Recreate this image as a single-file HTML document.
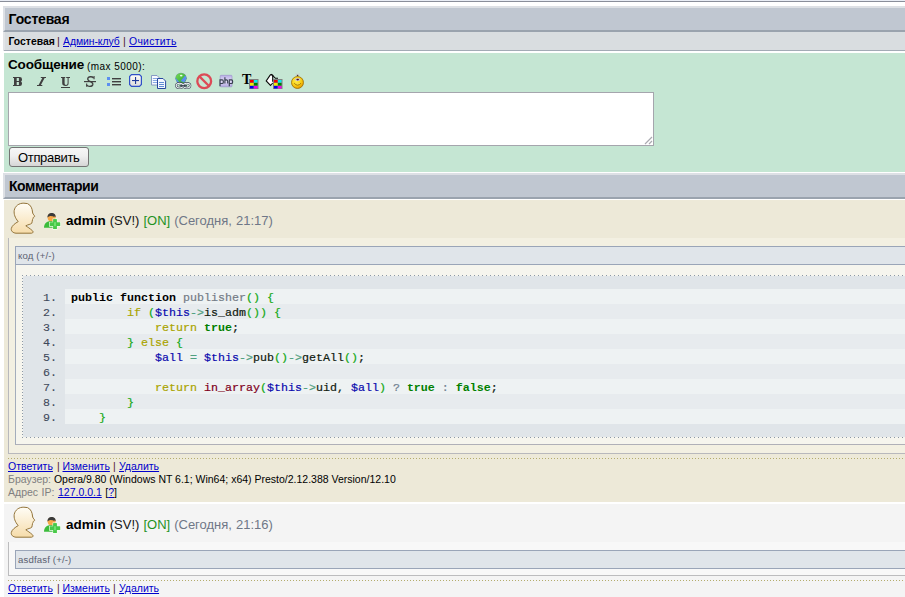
<!DOCTYPE html>
<html><head><meta charset="utf-8">
<style>
*{margin:0;padding:0;box-sizing:border-box}
html,body{width:905px;height:597px;overflow:hidden;background:#fff;font-family:"Liberation Sans",sans-serif;color:#000}
.a{position:absolute}
.t{position:absolute;white-space:nowrap;line-height:1}
.u{color:#0000cc;text-decoration:underline}
.sep{color:#502030}
.hdr{left:3px;width:910px;height:26px;background:#c0c7d1;border-top:2px solid #dde0e5;border-left:2px solid #dde0e5;border-bottom:2px solid #9aa3ae}
.mono{font-family:"Liberation Mono",monospace;font-size:11.67px;-webkit-text-stroke:0.2px currentColor}
svg{position:absolute;overflow:visible}
.row{position:absolute;left:65px;width:850px;height:15px}
.ln{position:absolute;left:23px;width:34px;text-align:right;color:#3e485a;-webkit-text-stroke:0.1px currentColor}
.code{position:absolute;left:71px;white-space:pre;color:#000}
.kw{font-weight:bold;color:#000;-webkit-text-stroke:0}
.fn{color:#747c86}
.gr{color:#14a814}
.ol{color:#aaa400}
.nv{color:#0a0aae}
.op{color:#50a080}
.dr{color:#800020}
.tr{color:#008000;font-weight:bold;-webkit-text-stroke:0}
.q{color:#708090}
.dk{color:#102010}
</style></head><body>
<div class="a" style="left:0;top:0;width:905px;height:1px;background:#e9edf5"></div>
<div class="a" style="left:0;top:1px;width:905px;height:1px;background:#8a8e9a"></div>

<!-- header 1 -->
<div class="a hdr" style="top:6px"></div>
<div class="t" id="h1" style="left:8.6px;top:12px;font-size:14px;font-weight:bold;letter-spacing:-0.2px">Гостевая</div>

<!-- subnav -->
<div class="a" style="left:3px;top:32px;width:910px;height:19px;background:#d9dde0;border-left:2px solid #e2e4e7"></div><div class="a" style="left:4px;top:50px;width:910px;height:1px;background:#a3abb5"></div>
<div class="t" id="sn1" style="left:8.5px;top:36.5px;font-size:10.4px;font-weight:bold;letter-spacing:0px">Гостевая</div>
<div class="t sep" id="sep1" style="left:57px;top:36px;font-size:11px">|</div>
<div class="t u" id="sn2" style="left:63px;top:36.5px;font-size:10.4px;letter-spacing:-0.05px">Админ-клуб</div>
<div class="t sep" id="sep2" style="left:123px;top:36px;font-size:11px">|</div>
<div class="t u" id="sn3" style="left:129px;top:36.5px;font-size:10.4px;letter-spacing:0.3px">Очистить</div>

<!-- green -->
<div class="a" style="left:4px;top:53px;width:910px;height:119px;background:#c5e6d3"></div>
<div class="t" id="msg1" style="left:8px;top:58px;font-size:13.5px;font-weight:bold;letter-spacing:-0.15px">Сообщение</div>
<div class="t" id="msg2" style="left:87px;top:62px;font-size:10px;letter-spacing:0.45px">(max 5000):</div>

<!-- toolbar -->
<svg style="left:13px;top:77px" width="10" height="10"><path fill="#404040" fill-rule="evenodd" d="M0 0H6.8Q9 0 9 2.2V2.8Q9 4 8 4.5Q9 5 9 6.3V6.8Q9 9 6.8 9H0V8.1H1V0.9H0Z M3.7 1.1H5.9V3.9H3.7Z M3.7 5.1H5.9V7.9H3.7Z"/></svg>
<svg style="left:37px;top:77px" width="10" height="10"><path fill="#404040" d="M3.8 0H9V1H3.8Z M0 8H5.3V9H0Z M5.3 1H7.6L3.9 8H1.6Z"/></svg>
<svg style="left:61px;top:77px" width="10" height="12"><path fill="#404040" d="M0 0H4.2V1H0Z M5.2 0H9V1H5.2Z M1.2 1H3.6V6.3Q3.6 8 5 8Q6.6 8 6.6 6.3V1H7.6V6.3Q7.6 9 4.8 9Q1.2 9 1.2 6.3Z M0 9.9H9V10.9H0Z"/></svg>
<svg style="left:84px;top:76px" width="13" height="12"><path fill="#404040" d="M0 5H12V6.2H0Z"/><path fill="none" stroke="#404040" stroke-width="1.4" d="M9.6 2Q8.5 0.7 6.5 0.8Q3.5 1 3.8 3.3Q4 4.6 6.5 5.6Q9 6.6 8.8 8.4Q8.5 10.5 5.5 10.4Q3.5 10.3 2.8 9"/><path fill="#404040" d="M9.5 0H10.6V3.2H9.5Z M2.1 7.4H3.2V10.8H2.1Z"/></svg>
<!-- list -->
<svg style="left:106px;top:76px" width="16" height="12">
 <rect x="1" y="1" width="3" height="3" fill="#5b8ef0"/><rect x="1" y="7" width="3" height="3" fill="#5b8ef0"/>
 <rect x="6" y="2" width="9" height="1.4" fill="#404040"/><rect x="6" y="5" width="9" height="1.4" fill="#404040"/><rect x="6" y="8" width="9" height="1.4" fill="#404040"/>
</svg>
<!-- plus box -->
<svg style="left:129px;top:74px" width="14" height="14">
 <defs><linearGradient id="pg" x1="0" y1="0" x2="0" y2="1"><stop offset="0" stop-color="#fffef8"/><stop offset="1" stop-color="#dcdcdc"/></linearGradient></defs>
 <path d="M2.5 0.6H10.5L12.4 2.5V10.5L10.5 12.4H2.5L0.6 10.5V2.5Z" fill="url(#pg)" stroke="#3050c8" stroke-width="1.2"/>
 <rect x="6" y="3" width="1.1" height="7" fill="#1f3a9a"/><rect x="3" y="6" width="7" height="1.1" fill="#1f3a9a"/>
</svg>
<!-- copy -->
<svg style="left:151px;top:75px" width="16" height="14">
 <path d="M0.5 0.5h5.5l2.5 2.5v7h-8z" fill="#f8faff" stroke="#7c90c0" stroke-width="0.9"/>
 <rect x="1.8" y="3" width="4.5" height="0.9" fill="#7aa0e0"/><rect x="1.8" y="5" width="4.5" height="0.9" fill="#7aa0e0"/><rect x="1.8" y="7" width="4.5" height="0.9" fill="#7aa0e0"/>
 <path d="M6.5 3.5h5.5l2.6 2.6v7.4h-8.1z" fill="#f4f8ff" stroke="#2848a0" stroke-width="1"/>
 <rect x="8" y="7" width="5" height="0.9" fill="#5080d0"/><rect x="8" y="9" width="5" height="0.9" fill="#5080d0"/><rect x="8" y="11" width="5" height="0.9" fill="#5080d0"/>
</svg>
<!-- globe link -->
<svg style="left:175px;top:73px" width="18" height="17">
 <defs><clipPath id="gc"><circle cx="6" cy="5.3" r="5.4"/></clipPath>
 <linearGradient id="ggr" x1="0" y1="0" x2="1" y2="1"><stop offset="0" stop-color="#7ee05a"/><stop offset="1" stop-color="#1a9a2a"/></linearGradient></defs>
 <circle cx="6" cy="5.3" r="5.6" fill="#7a8ab0"/>
 <g clip-path="url(#gc)">
  <rect x="0" y="-1" width="13" height="13" fill="url(#ggr)"/>
  <path d="M0 4L4.8 9.8 0 11Z" fill="#5a8ef0"/>
  <path d="M10.2 2.6L5.6 8 9.4 9.4 12 5Z" fill="#5a8ef0"/>
 </g>
 <ellipse cx="6.2" cy="2.6" rx="1.3" ry="0.9" fill="#e8ffe8"/>
 <ellipse cx="4.6" cy="12.6" rx="3.4" ry="2.4" fill="none" stroke="#3c4656" stroke-width="2.2"/>
 <ellipse cx="11.8" cy="12.6" rx="3.4" ry="2.4" fill="none" stroke="#3c4656" stroke-width="2.2"/>
 <ellipse cx="4.6" cy="12.6" rx="3.4" ry="2.4" fill="none" stroke="#eef2f6" stroke-width="1.1"/>
 <ellipse cx="11.8" cy="12.6" rx="3.4" ry="2.4" fill="none" stroke="#eef2f6" stroke-width="1.1"/>
 <rect x="4.5" y="12.2" width="7.5" height="1.3" fill="#2a3444"/>
</svg>
<!-- stop -->
<svg style="left:196px;top:73px" width="17" height="17">
 <circle cx="8.2" cy="8.2" r="6.9" fill="none" stroke="#dc4a56" stroke-width="2.3"/>
 <path d="M3.4 3.4l9.6 9.6" stroke="#dc4a56" stroke-width="2.3"/>
</svg>
<!-- php -->
<svg style="left:219px;top:75px" width="15" height="13">
 <defs><linearGradient id="phg" x1="0" y1="0" x2="0" y2="1"><stop offset="0" stop-color="#b8aee6"/><stop offset="0.5" stop-color="#e4def8"/><stop offset="1" stop-color="#b0a6e0"/></linearGradient></defs>
 <rect x="1.2" y="0.3" width="11.8" height="11.5" rx="0.8" fill="url(#phg)" stroke="#9a90c8" stroke-width="0.6"/>
 <path d="M1 11.2V4.9H3.2Q4.3 4.9 4.3 6.2V7.2Q4.3 8.5 3.2 8.5H1 M5.9 2.2V8.6 M5.9 5.4Q6.3 4.9 7.3 4.9Q8.7 4.9 8.7 6.2V8.6 M10.3 11.2V4.9H12.5Q13.6 4.9 13.6 6.2V7.2Q13.6 8.5 12.5 8.5H10.3" fill="none" stroke="#384050" stroke-width="1.15"/>
</svg>
<!-- T color -->
<div class="t" style="left:242px;top:73px;font-family:'Liberation Serif',serif;font-size:14px;font-weight:bold">T</div>
<svg style="left:249px;top:79px" width="10" height="10">
 <rect x="0" y="0" width="9.5" height="10" fill="#808080"/>
 <rect x="1" y="1" width="3.5" height="2.5" fill="#f00000"/><rect x="5" y="1" width="3.5" height="2.5" fill="#00f0f0"/>
 <rect x="1" y="4" width="3.5" height="2.5" fill="#f0f000"/><rect x="5" y="4" width="3.5" height="2.5" fill="#008000"/>
 <rect x="1" y="7" width="3.5" height="2.5" fill="#0000f0"/><rect x="5" y="7" width="3.5" height="2.5" fill="#f000f0"/>
</svg>
<!-- bucket -->
<svg style="left:265px;top:73px" width="18" height="17">
 <path d="M5.5 1.8L1.4 7.9 5.5 12.3 7.7 10V3.3Q6.6 1.2 5.5 1.8Z" fill="#fff"/>
 <path d="M5.5 1.6L1.2 7.9 5.5 12.5 7.7 10 M5 2.2Q6.6 0.6 7.7 3.3V8.8 M6.2 1.3Q7.4 1.4 9 3.8L10.4 5.3H13" fill="none" stroke="#0a0a0a" stroke-width="1.1"/>
</svg>
<svg style="left:273px;top:79px" width="10" height="10">
 <rect x="0" y="0" width="9.5" height="10" fill="#808080"/>
 <rect x="1" y="1" width="3.5" height="2.5" fill="#f00000"/><rect x="5" y="1" width="3.5" height="2.5" fill="#00f0f0"/>
 <rect x="1" y="4" width="3.5" height="2.5" fill="#f0f000"/><rect x="5" y="4" width="3.5" height="2.5" fill="#008000"/>
 <rect x="1" y="7" width="3.5" height="2.5" fill="#0000f0"/><rect x="5" y="7" width="3.5" height="2.5" fill="#f000f0"/>
</svg>
<!-- smiley -->
<svg style="left:290px;top:72px" width="16" height="18">
 <defs><radialGradient id="sg" cx="0.4" cy="0.35" r="0.7"><stop offset="0" stop-color="#fff050"/><stop offset="0.6" stop-color="#f8cc10"/><stop offset="1" stop-color="#e09000"/></radialGradient></defs>
 <path d="M5.6 1.6L9.6 4M9.6 1.6L5.6 4" stroke="#c8c8c8" stroke-width="0.9"/>
 <circle cx="7.6" cy="3.6" r="0.8" fill="#503820"/>
 <circle cx="7.5" cy="10.5" r="6" fill="url(#sg)" stroke="#9a6c00" stroke-width="0.8"/>
 <ellipse cx="7.7" cy="7.6" rx="2.8" ry="1.4" fill="#c4bce0"/>
 <ellipse cx="7.7" cy="7.6" rx="1.3" ry="0.8" fill="#501818"/>
 <path d="M4.2 11.2Q7.6 15.2 11 11.2" fill="#f8e040" stroke="#a07000" stroke-width="0.9"/>
</svg>
<!-- textarea -->
<div class="a" style="left:8px;top:92px;width:646px;height:54px;background:#fff;border:1px solid #a5a5ad"></div>
<svg style="left:644px;top:136px" width="9" height="9">
 <path d="M1 8L8 1M5 8L8 5" stroke="#aaaab0" stroke-width="1.2"/>
</svg>
<!-- button -->
<div class="a" id="btn" style="left:9px;top:147px;width:80px;height:20px;border:1px solid #747474;border-radius:3px;background:linear-gradient(#f7f7f7,#efefef 45%,#d6d6d6)"></div>
<div class="t" id="btnt" style="left:18px;top:151px;font-size:13px;letter-spacing:-0.33px">Отправить</div>

<!-- header 2 -->
<div class="a hdr" style="top:173px"></div>
<div class="t" id="h2" style="left:9px;top:179px;font-size:14px;font-weight:bold;letter-spacing:-0.45px">Комментарии</div>

<!-- comment 1 -->
<div class="a" style="left:4px;top:200px;width:910px;height:302px;background:#ede9d8"></div>
<svg class="avatar" style="left:8px;top:200px" width="30" height="36">
 <defs><linearGradient id="ag" x1="0" y1="0" x2="0" y2="1"><stop offset="0" stop-color="#fffdf6"/><stop offset="1" stop-color="#f6dcaa"/></linearGradient></defs>
 <path d="M15.9 3.2C11 3 7 6 6.2 10.5 5.8 14 6.8 17.5 10.2 21.6 7 23.5 4 25.5 3.3 28.5 2.8 31 5 33 8 33.2L23.5 33.2C25.5 33 25.3 31.5 24.5 30.8 22 28.5 19.5 27 17.8 25.8 20 24.5 22.5 24.5 23.8 23.2 24.5 22 24 20.5 24.5 19.5 25.2 18.8 25 18 25.2 17.5 26 17 27 16.8 26.5 15.8 25.5 14.5 24.5 13.5 24.5 12 24.3 9 23 5 19.5 3.6z" fill="url(#ag)" stroke="#93743a" stroke-width="1"/>
</svg>
<svg style="left:42px;top:210px" width="20" height="20">
 <circle cx="9.6" cy="7.6" r="4" fill="#f6a848"/>
 <path d="M5.5 7.6C5.3 4 7.5 2.9 9.7 2.9 11.8 2.9 13.9 4 13.7 7.3 13 6.3 12.2 6.2 11.3 6.8 10.5 5.8 9.3 6.3 8.3 6 7.3 6.3 6.3 6.6 5.5 7.6Z" fill="#3a3a3a"/>
 <path d="M2 17.8C2 14.5 3.5 11.8 7.5 11.3H11.5V17.8Z" fill="#3cbc3c"/>
 <path d="M11.3 9.3H14.7V12.6H18.1V16H14.7V19H11.3V16H7.9V12.6H11.3Z" fill="#4ccc4c" stroke="#f4fff0" stroke-width="1.4" paint-order="stroke"/>
 <path d="M11.3 9.3H14.7V12.6H18.1V16H14.7V19H11.3V16H7.9V12.6H11.3Z" fill="#48c848"/>
 <rect x="12" y="12.2" width="2" height="4" fill="#80e880" opacity="0.7"/>
</svg>
<div class="t" id="c1h" style="left:66px;top:214px;word-spacing:0.4px;font-size:13px"><b style="font-size:13.5px">admin</b> <span style="color:#141414">(SV!)</span> <span style="color:#1f921f">[ON]</span> <span style="color:#6f7787">(Сегодня, 21:17)</span></div>

<!-- code box -->
<div class="a" style="left:8px;top:238px;width:910px;height:216px;background:#f3f0e2;border-left:1px solid #b8b8bc;border-bottom:1px solid #b8b8bc"></div>
<div class="a" style="left:15px;top:246px;width:910px;height:199px;background:#f6f5ee;border-left:1px solid #a4adbc;border-bottom:1px solid #b0b0b8"></div>
<div class="a" style="left:15px;top:246px;width:910px;height:19px;background:#e0e5ea;border-top:1px solid #9aa5b8;border-left:1px solid #9aa5b8;border-bottom:1px solid #9aa5b8"></div>
<div class="t" id="kod" style="left:18px;top:251px;font-size:9.6px;letter-spacing:0.15px;color:#5a6070">код (+/-)</div>
<div class="a" style="left:22px;top:275px;width:900px;height:163px;background:#e0e5e9"></div><div class="a" style="left:22px;top:275px;width:900px;height:1px;background:repeating-linear-gradient(90deg,#8c98a6 0 1px,#f6f5ee 1px 4px)"></div><div class="a" style="left:22px;top:437px;width:900px;height:1px;background:repeating-linear-gradient(90deg,#8c98a6 0 1px,#f6f5ee 1px 4px)"></div><div class="a" style="left:22px;top:275px;width:1px;height:163px;background:repeating-linear-gradient(180deg,#8c98a6 0 1px,#f6f5ee 1px 3px)"></div>

<div class="row" style="top:289px;background:#eef2f3"></div>
<div class="row" style="top:304px;background:#e7ebee"></div>
<div class="row" style="top:319px;background:#eef2f3"></div>
<div class="row" style="top:334px;background:#e7ebee"></div>
<div class="row" style="top:349px;background:#eef2f3"></div>
<div class="row" style="top:364px;background:#e7ebee"></div>
<div class="row" style="top:379px;background:#eef2f3"></div>
<div class="row" style="top:394px;background:#e7ebee"></div>
<div class="row" style="top:409px;background:#eef2f3"></div>

<div class="mono">
<div class="ln t" style="top:293px">1.</div>
<div class="ln t" style="top:308px">2.</div>
<div class="ln t" style="top:323px">3.</div>
<div class="ln t" style="top:338px">4.</div>
<div class="ln t" style="top:353px">5.</div>
<div class="ln t" style="top:368px">6.</div>
<div class="ln t" style="top:383px">7.</div>
<div class="ln t" style="top:398px">8.</div>
<div class="ln t" style="top:413px">9.</div>
<div class="code t" id="cl1" style="top:293px"><span class="kw">public function</span> <span class="fn">publisher</span><span class="gr">() {</span></div>
<div class="code t" style="top:308px">        <span class="ol">if</span> <span class="gr">(</span><span class="nv">$this</span><span class="op">-&gt;</span><span class="dk">is_adm</span><span class="gr">()) {</span></div>
<div class="code t" style="top:323px">            <span class="ol">return</span> <span class="tr">true</span><span class="dk">;</span></div>
<div class="code t" style="top:338px">        <span class="gr">}</span> <span class="ol">else</span> <span class="gr">{</span></div>
<div class="code t" style="top:353px">            <span class="nv">$all</span> <span class="op">=</span> <span class="nv">$this</span><span class="op">-&gt;</span><span class="dk">pub</span><span class="gr">()</span><span class="op">-&gt;</span><span class="dk">getAll</span><span class="gr">()</span><span class="dk">;</span></div>
<div class="code t" id="cl7" style="top:383px">            <span class="ol">return</span> <span class="dr">in_array</span><span class="gr">(</span><span class="nv">$this</span><span class="op">-&gt;</span><span class="dk">uid</span><span class="dk">,</span> <span class="nv">$all</span><span class="gr">)</span> <span class="q">?</span> <span class="tr">true</span> <span class="q">:</span> <span class="tr">false</span><span class="dk">;</span></div>
<div class="code t" style="top:398px">        <span class="gr">}</span></div>
<div class="code t" style="top:413px">    <span class="gr">}</span></div>
</div>

<!-- dotted sep 1 -->
<div class="a" style="left:8px;top:458px;width:900px;height:1px;background:repeating-linear-gradient(90deg,#b4ac6c 0 1px,transparent 1px 3px)"></div>
<div class="t u" id="c1la" style="left:8px;top:461px;font-size:10.5px">Ответить</div><div class="t sep" style="left:57px;top:461px;font-size:10.5px">|</div><div class="t u" id="c1lb" style="left:62.5px;top:461px;font-size:10.5px">Изменить</div><div class="t sep" style="left:113px;top:461px;font-size:10.5px">|</div><div class="t u" id="c1lc" style="left:119px;top:461px;font-size:10.5px">Удалить</div>
<div class="t" id="c1b" style="left:8px;top:474px;font-size:10.5px"><span style="color:#808080">Браузер:</span> Opera/9.80 (Windows NT 6.1; Win64; x64) Presto/2.12.388 Version/12.10</div>
<div class="t" id="c1ip" style="left:8px;top:487px;font-size:10.5px;word-spacing:0.6px"><span style="color:#808080">Адрес IP:</span> <span class="u">127.0.0.1</span> [<span class="u">?</span>]</div>

<!-- comment 2 -->
<div class="a" style="left:4px;top:504px;width:910px;height:100px;background:#f4f4f4"></div>
<svg style="left:8px;top:504px" width="30" height="36">
 <defs><linearGradient id="ag2" x1="0" y1="0" x2="0" y2="1"><stop offset="0" stop-color="#fffdf6"/><stop offset="1" stop-color="#f6dcaa"/></linearGradient></defs>
 <path d="M15.9 3.2C11 3 7 6 6.2 10.5 5.8 14 6.8 17.5 10.2 21.6 7 23.5 4 25.5 3.3 28.5 2.8 31 5 33 8 33.2L23.5 33.2C25.5 33 25.3 31.5 24.5 30.8 22 28.5 19.5 27 17.8 25.8 20 24.5 22.5 24.5 23.8 23.2 24.5 22 24 20.5 24.5 19.5 25.2 18.8 25 18 25.2 17.5 26 17 27 16.8 26.5 15.8 25.5 14.5 24.5 13.5 24.5 12 24.3 9 23 5 19.5 3.6z" fill="url(#ag2)" stroke="#93743a" stroke-width="1"/>
</svg>
<svg style="left:42px;top:514px" width="20" height="20">
 <circle cx="9.6" cy="7.6" r="4" fill="#f6a848"/>
 <path d="M5.5 7.6C5.3 4 7.5 2.9 9.7 2.9 11.8 2.9 13.9 4 13.7 7.3 13 6.3 12.2 6.2 11.3 6.8 10.5 5.8 9.3 6.3 8.3 6 7.3 6.3 6.3 6.6 5.5 7.6Z" fill="#3a3a3a"/>
 <path d="M2 17.8C2 14.5 3.5 11.8 7.5 11.3H11.5V17.8Z" fill="#3cbc3c"/>
 <path d="M11.3 9.3H14.7V12.6H18.1V16H14.7V19H11.3V16H7.9V12.6H11.3Z" fill="#4ccc4c" stroke="#f4fff0" stroke-width="1.4" paint-order="stroke"/>
 <path d="M11.3 9.3H14.7V12.6H18.1V16H14.7V19H11.3V16H7.9V12.6H11.3Z" fill="#48c848"/>
 <rect x="12" y="12.2" width="2" height="4" fill="#80e880" opacity="0.7"/>
</svg>
<div class="t" id="c2h" style="left:66px;top:518px;word-spacing:0.4px;font-size:13px"><b style="font-size:13.5px">admin</b> <span style="color:#141414">(SV!)</span> <span style="color:#1f921f">[ON]</span> <span style="color:#6f7787">(Сегодня, 21:16)</span></div>
<div class="a" style="left:8px;top:542px;width:910px;height:34px;background:#f8f8f8;border-left:1px solid #bcbcbe;border-bottom:1px solid #bcbcbe"></div>
<div class="a" style="left:15px;top:550px;width:910px;height:19px;background:#e0e5ea;border:1px solid #9aa5b8"></div>
<div class="t" id="asd" style="left:18px;top:555px;font-size:9.6px;letter-spacing:0.15px;color:#5a6070">asdfasf (+/-)</div>
<div class="a" style="left:8px;top:580px;width:900px;height:1px;background:repeating-linear-gradient(90deg,#b4ac6c 0 1px,transparent 1px 3px)"></div>
<div class="t u" id="c2la" style="left:8px;top:583px;font-size:10.5px">Ответить</div><div class="t sep" style="left:57px;top:583px;font-size:10.5px">|</div><div class="t u" id="c2lb" style="left:62.5px;top:583px;font-size:10.5px">Изменить</div><div class="t sep" style="left:113px;top:583px;font-size:10.5px">|</div><div class="t u" id="c2lc" style="left:119px;top:583px;font-size:10.5px">Удалить</div>

</body></html>
